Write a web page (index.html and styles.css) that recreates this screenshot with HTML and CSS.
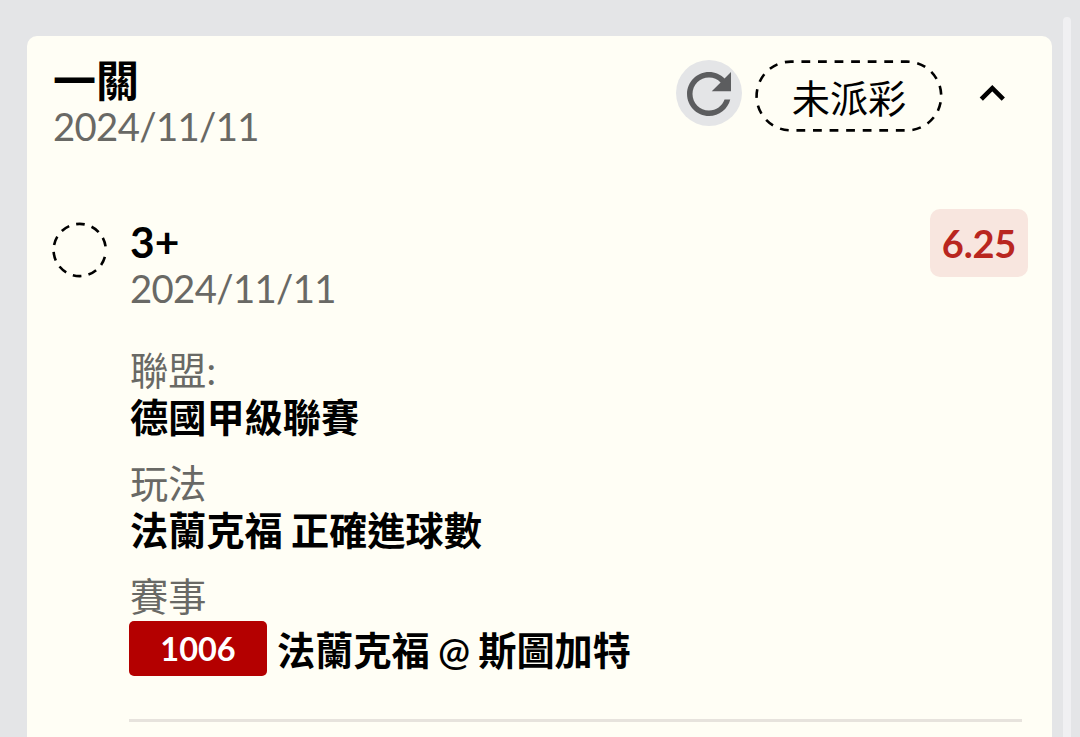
FILE: index.html
```html
<!DOCTYPE html>
<html lang="zh-Hant">
<head>
<meta charset="utf-8">
<title>一關</title>
<link rel="stylesheet" href="styles.css">
</head>
<body>
<main class="card">
  <header class="card-head">
    <div class="heading">
      <h1 class="title">一關</h1>
      <p class="date">2024/11/11</p>
    </div>
    <button class="refresh" type="button">
      <svg width="66" height="66" viewBox="0 0 24 24"><path fill="#5c5d5f" d="M17.65 6.35C16.2 4.9 14.21 4 12 4c-4.42 0-7.99 3.58-7.99 8s3.57 8 7.99 8c3.73 0 6.84-2.55 7.73-6h-2.08c-.82 2.33-3.04 4-5.65 4-3.31 0-6-2.69-6-6s2.69-6 6-6c1.66 0 3.14.69 4.22 1.78L13 11h7V4l-2.35 2.35z"/></svg>
    </button>
    <div class="status">
      <svg class="status-line" width="188" height="72" viewBox="0 0 188 72"><rect x="1.6" y="1.6" width="184.6" height="68.8" rx="34.4" pathLength="27" stroke-dasharray=".53 .47" stroke-dashoffset=".37"/></svg>
      <span>未派彩</span>
    </div>
    <svg class="chevron" width="30" height="20" viewBox="0 0 30 20"><path d="M3.3 16.2 14.3 5.2l11 11"/></svg>
  </header>
  <section class="bet">
    <svg class="marker" width="56" height="56" viewBox="0 0 56 56"><circle cx="27.7" cy="28" r="26.1" stroke-dasharray="8.8 7.12" stroke-dashoffset="-7.1"/></svg>
    <div class="detail">
      <div class="pick-row">
        <div>
          <h2 class="pick">3+</h2>
          <p class="date">2024/11/11</p>
        </div>
        <span class="odds">6.25</span>
      </div>
      <dl class="facts">
        <div class="fact"><dt>聯盟:</dt><dd>德國甲級聯賽</dd></div>
        <div class="fact"><dt>玩法</dt><dd>法蘭克福 正確進球數</dd></div>
        <div class="fact"><dt>賽事</dt><dd class="match"><span class="code">1006</span><span class="teams">法蘭克福 @ 斯圖加特</span></dd></div>
      </dl>
      <hr class="rule">
    </div>
  </section>
</main>
<div class="scroll"></div>
</body>
</html>
```

FILE: styles.css
```css
* { box-sizing: border-box; margin: 0; padding: 0; }
body {
  display: flex;
  height: 737px;
  overflow: hidden;
  background: #e4e5e7;
  color: #000;
  font-family: Lato, "Noto Sans CJK TC", sans-serif;
  font-size: 38.2px;
}
.card {
  width: 1025px;
  height: 720px;
  margin: 36px 0 0 27px;
  padding: 23px 24px 0 26px;
  border-radius: 10px 10px 0 0;
  background: #fffef5;
}
.card-head { display: flex; align-items: flex-start; height: 149px; }
.heading { flex: 1; }
.title { font-size: 43px; line-height: 44px; font-weight: 600; }
.date { font-size: 38.3px; line-height: 46px; letter-spacing: -.65px; color: #696965; }
.refresh {
  width: 66px;
  height: 66px;
  margin-top: 1px;
  border: 0;
  border-radius: 50%;
  background: #e4e5e7;
}
.refresh svg { display: block; margin-top: 1px; }
.status {
  position: relative;
  display: grid;
  place-items: center;
  width: 188px;
  height: 72px;
  margin: 1px 0 0 13px;
  line-height: 72px;
}
.status span { padding-top: 2px; height: 72px; }
.status-line { position: absolute; inset: 0; }
.status-line, .marker, .chevron { fill: none; stroke: #000; stroke-width: 2.6; }
.chevron { margin: 24px 20px 0 35px; stroke-width: 4.6; }
.bet { display: flex; align-items: flex-start; }
.marker { flex: none; margin-top: 14px; margin-left: -1px; }
.detail { flex: 1; margin-left: 22px; }
.pick-row { display: flex; justify-content: space-between; align-items: flex-start; height: 139px; padding-top: 1px; }
.pick { font-size: 42.5px; line-height: 56px; padding-top: 5px; margin-bottom: -5px; font-weight: 700; }
.odds {
  width: 98px;
  height: 68px;
  border-radius: 10px;
  background: #f8e6df;
  color: #b9261f;
  font-size: 38px;
  font-weight: 700;
  line-height: 69px;
  letter-spacing: -.2px;
  text-align: center;
}
.facts { display: grid; gap: 18px; }
.fact dt { line-height: 47px; color: #696965; }
.fact dd { line-height: 48px; margin-top: -1px; padding-bottom: 1px; font-weight: 600; word-spacing: -1.3px; }
.fact .match { display: flex; align-items: center; gap: 10px; height: 55px; margin: 1px 0 0 -1px; padding: 0; }
.teams { position: relative; top: 1px; }
.code {
  width: 138px;
  height: 55px;
  border-radius: 5px;
  background: #b40000;
  color: #fff;
  font-size: 32.5px;
  font-weight: 700;
  line-height: 56px;
  text-align: center;
}
.rule { height: 3px; margin: 43px 6px 0 -1px; border: 0; background: #e7e3dd; }
.scroll { width: 8px; height: 730px; margin: 17px 0 0 11px; border-radius: 4px 4px 0 0; background: #f0f0f2; }
```
